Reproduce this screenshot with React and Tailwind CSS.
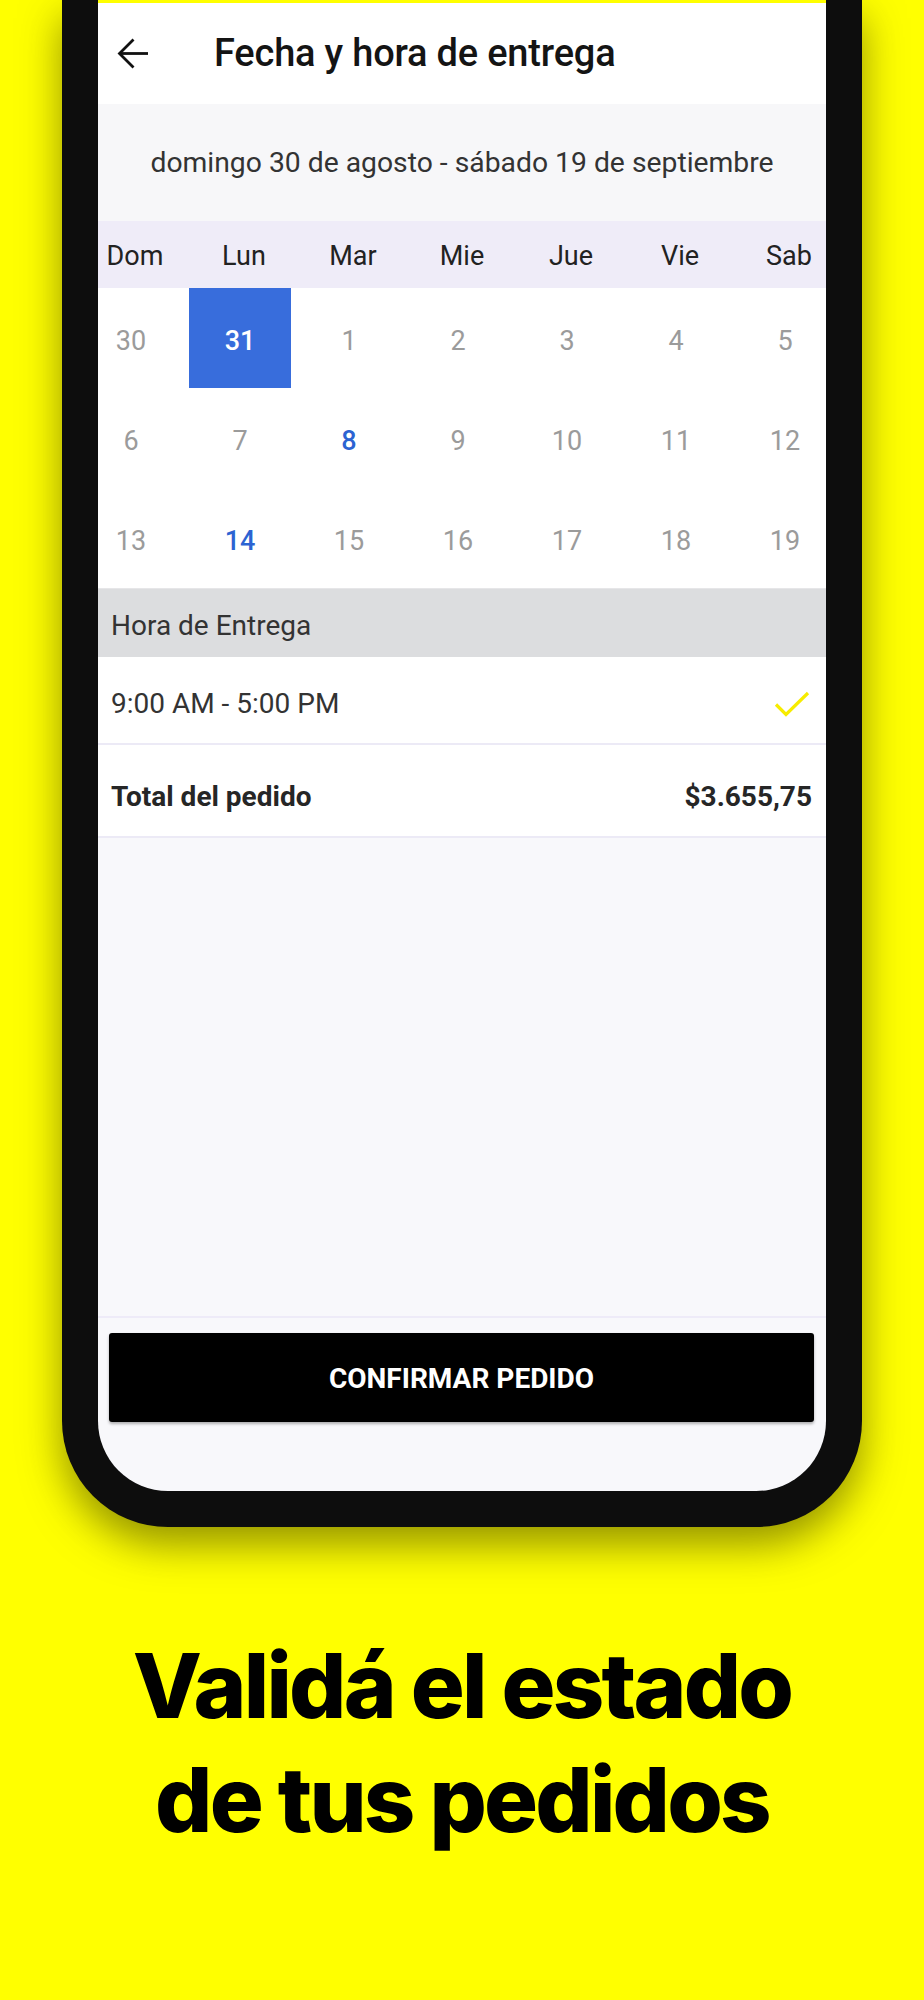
import React from "react";

const days = ["Dom", "Lun", "Mar", "Mie", "Jue", "Vie", "Sab"];
const weeks = [
  ["30", "31", "1", "2", "3", "4", "5"],
  ["6", "7", "8", "9", "10", "11", "12"],
  ["13", "14", "15", "16", "17", "18", "19"],
];
const blue = new Set(["8", "14"]);

function DayCell({ d }) {
  if (d === "31") {
    return (
      <div className="flex h-full items-center justify-center">
        <div className="flex h-full w-[102px] items-center justify-center bg-[#386ddc] pt-[6px] text-[27px] font-medium text-white">
          {d}
        </div>
      </div>
    );
  }
  return (
    <div
      className={
        blue.has(d)
          ? "flex h-full items-center justify-center pt-[6px] text-[27px] font-medium text-[#2c63d2]"
          : "flex h-full items-center justify-center pt-[6px] text-[27px] text-[#9b9b9b]"
      }
    >
      {d}
    </div>
  );
}

export default function App() {
  return (
    <div
      className="relative flex h-[2000px] w-[924px] flex-col overflow-hidden bg-[#ffff00]"
      style={{ fontFamily: "Roboto, 'Liberation Sans', sans-serif" }}
    >
      {/* phone */}
      <div className="ml-[62px] h-[1527px] w-[800px] shrink-0 rounded-b-[106px] bg-[#0d0d0d] px-[36px] pb-[36px] shadow-[0_18px_40px_rgba(60,60,0,0.55)]">
        <div className="flex h-full flex-col overflow-hidden rounded-b-[70px] bg-[#f8f8fb]">
          <div className="h-[3px] shrink-0 bg-[#ffff00]" />
          {/* header */}
          <div className="flex h-[101px] shrink-0 items-center bg-white">
            <svg
              className="ml-[19px]"
              width="32"
              height="31"
              viewBox="0 0 32 31"
              fill="none"
              stroke="#111"
              strokeWidth="2.8"
            >
              <path d="M31 15.5H3" />
              <path d="M16.5 1.5 2.5 15.5l14 14" />
            </svg>
            <div className="ml-[65px] text-[38px] font-medium tracking-[-0.2px] text-[#141414]">
              Fecha y hora de entrega
            </div>
          </div>
          {/* date range */}
          <div className="flex h-[117px] shrink-0 items-center justify-center bg-[#f7f7f9] pt-[2px] text-[28.3px] text-[#333]">
            domingo 30 de agosto - sábado 19 de septiembre
          </div>
          {/* weekdays */}
          <div className="h-[67px] shrink-0 bg-[#efecf8]">
            <div className="-ml-[17.5px] grid h-full w-[763px] grid-cols-[repeat(7,109px)]">
              {days.map((d) => (
                <div key={d} className="flex items-center justify-center pt-[4px] text-[27px] text-[#222]">
                  {d}
                </div>
              ))}
            </div>
          </div>
          {/* calendar */}
          <div className="shrink-0 bg-white">
            {weeks.map((w, i) => (
              <div key={i} className="-ml-[21.5px] grid h-[100px] w-[763px] grid-cols-[repeat(7,109px)]">
                {w.map((d) => (
                  <DayCell key={d} d={d} />
                ))}
              </div>
            ))}
          </div>
          {/* hora de entrega */}
          <div className="flex h-[69px] shrink-0 items-center border-t border-[#e6e6e8] bg-[#dcdddf] pl-[13px] pt-[5px] text-[28px] text-[#333]">
            Hora de Entrega
          </div>
          <div className="flex h-[88px] shrink-0 items-center justify-between border-b-2 border-[#eceaf6] bg-white pl-[13px] pr-[16px] pt-[8px] text-[28px] text-[#333]">
            <span>9:00 AM - 5:00 PM</span>
            <svg width="36" height="26" viewBox="0 0 36 26" fill="none" stroke="#f7ec00" strokeWidth="3.2">
              <path d="M2 13.5 12 23.5 34 2" />
            </svg>
          </div>
          <div className="flex h-[93px] shrink-0 items-center justify-between border-b-2 border-[#eceaf6] bg-white pl-[13px] pr-[14px] pt-[12px] text-[28px] font-bold text-[#262626]">
            <span>Total del pedido</span>
            <span>$3.655,75</span>
          </div>
          <div className="flex-1" />
          {/* footer */}
          <div className="h-[175px] shrink-0 border-t-2 border-[#eeebf8] pt-[15px]">
            <div className="ml-[11px] mr-[12px] flex h-[89px] items-center justify-center rounded-[3px] bg-black pt-[2px] text-[28px] font-bold text-white shadow-[0_2px_3px_rgba(0,0,0,0.3)]">
              CONFIRMAR PEDIDO
            </div>
          </div>
        </div>
      </div>
      {/* headline */}
      <div
        className="mt-[102px] text-center text-[90px] font-extrabold leading-[114px] tracking-[-2.8px] text-black"
        style={{ fontFamily: "Inter, 'Liberation Sans', sans-serif" }}
      >
        <div>Validá el estado</div>
        <div>de tus pedidos</div>
      </div>
    </div>
  );
}
